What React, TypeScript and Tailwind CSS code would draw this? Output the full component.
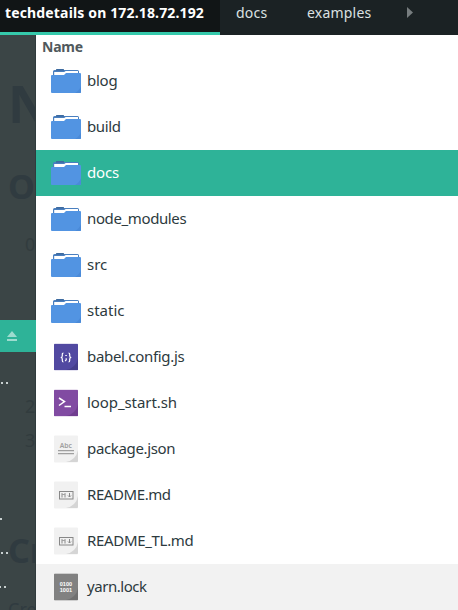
import React from "react";

type Kind = "folder" | "babel" | "shell" | "text" | "markdown" | "binary";
type Entry = { name: string; kind: Kind; tracking?: string };

const entries: Entry[] = [
  { name: "blog", kind: "folder", tracking: "tracking-[-0.25px]" },
  { name: "build", kind: "folder", tracking: "tracking-[-0.4px]" },
  { name: "docs", kind: "folder", tracking: "tracking-[-0.15px]" },
  { name: "node_modules", kind: "folder", tracking: "tracking-[-0.38px]" },
  { name: "src", kind: "folder" },
  { name: "static", kind: "folder" },
  { name: "babel.config.js", kind: "babel", tracking: "tracking-[-0.32px]" },
  { name: "loop_start.sh", kind: "shell", tracking: "tracking-[-0.08px]" },
  { name: "package.json", kind: "text", tracking: "tracking-[-0.35px]" },
  { name: "README.md", kind: "markdown", tracking: "tracking-[-0.42px]" },
  { name: "README_TL.md", kind: "markdown", tracking: "tracking-[-0.32px]" },
  { name: "yarn.lock", kind: "binary", tracking: "tracking-[-0.45px]" },
];

function FolderIcon() {
  return (
    <svg width="30" height="24" viewBox="0 0 30 24" className="block">
      <path d="M2 7V2.500Q2 1 3.500 1H5l1-1h6l1 1h13.500Q28 1 28 2.500V7Z" fill="#4a7fbf" />
      <path d="M3.200 3h10l1.500-1H27v5H3.200Z" fill="#fff" />
      <path d="M5 .3h8v1.200H5Z" fill="#386394" />
      <path d="M0 7Q0 6 1 6h12l2-2h14q1 0 1 1v18q0 1-1 1H1q-1 0-1-1Z" fill="#5294e2" />
      <path d="M30 17v6q0 1-1 1h-5q4.500-2.500 6-7Z" fill="#4a8ad8" />
    </svg>
  );
}

const sheet: Record<Exclude<Kind, "folder">, [string, string, string]> = {
  babel: ["#5149a1", "#453e8b", "#c9c6e4"],
  shell: ["#814ba2", "#703d8f", "#d7c5e1"],
  text: ["#f1f1f1", "#d5d5d5", "#f1f1f1"],
  markdown: ["#f1f1f1", "#d5d5d5", "#f1f1f1"],
  binary: ["#818181", "#707070", "#aaa"],
};

function FileIcon({ kind }: { kind: Exclude<Kind, "folder"> }) {
  const [body, fold, edge] = sheet[kind];
  return (
    <svg width="24" height="28" viewBox="0 0 24 28" className="block">
      <rect y=".5" width="24" height="27" rx="1" fill={edge} />
      <rect y="1" width="24" height="26" rx=".5" fill={body} />
      <path d="M24 15v11q0 1-1 1H12Q22 25 24 15Z" fill={fold} />
      {kind === "babel" && (
        <g fill="none" stroke="#fff" strokeWidth="1.200">
          <path d="M9.500 10Q8.300 10 8.300 11.300v1.400Q8.300 14.500 6.700 14.500 8.300 14.500 8.300 16v1.500q0 1.500 1.200 1.500M14.500 10Q15.700 10 15.700 11.300v1.400q0 1.800 1.600 1.800Q15.700 14.500 15.700 16v1.500q0 1.500-1.200 1.500" />
          <path d="M11.300 12.500h1.500M12.200 15.300v1.500l-1 1.200" />
        </g>
      )}
      {kind === "shell" && (
        <path d="m5 9 5.500 3.500L5 16.500M10.500 17.500H17" fill="none" stroke="#fff" strokeWidth="1.500" />
      )}
      {kind === "text" && (
        <g fill="#a0a0a0">
          <text x="5.700" y="12.500" fontSize="6.800" fontWeight="600" fontFamily="Noto Sans, sans-serif">Abc</text>
          <path d="M4 15h16v1.200H4zM4 18h16v1.200H4z" />
        </g>
      )}
      {kind === "markdown" && (
        <g fill="none" stroke="#888">
          <rect x="5.500" y="10.500" width="13.500" height="7.500" />
          <path d="M8 16.500v-4L9.500 14 11 12.500v4M15.500 12v4m-1.500-1.500 1.500 1.500 1.500-1.500" />
        </g>
      )}
      {kind === "binary" && (
        <g fill="#fff" fontSize="5.600" fontWeight="700" fontFamily="Liberation Sans, sans-serif">
          <text x="5.700" y="12.500">0100</text>
          <text x="5.700" y="19">1001</text>
        </g>
      )}
    </svg>
  );
}

function Row({ entry }: { entry: Entry }) {
  const tone =
    entry.name === "docs"
      ? "bg-[#2eb398] text-white"
      : entry.name === "yarn.lock"
        ? "bg-[#f2f2f2] text-[#2d3a3e]"
        : "text-[#2d3a3e]";
  return (
    <li className={`flex h-[46px] items-center pl-[15px] ${tone}`}>
      <span className="flex w-[30px] justify-center">
        {entry.kind === "folder" ? <FolderIcon /> : <FileIcon kind={entry.kind} />}
      </span>
      <span className={`ml-[6px] whitespace-nowrap pb-[2px] text-[15px] leading-[20px] ${entry.tracking ?? ""}`}>{entry.name}</span>
    </li>
  );
}

function Backdrop() {
  return (
    <aside className="relative w-9 shrink-0 overflow-hidden bg-[#3b4546] text-[#303b40]">
      <span className="absolute left-[8px] top-[34px] text-[52px] font-bold leading-[68px]">N</span>
      <span className="absolute left-[8px] top-[128px] text-[34px] font-bold leading-[46px]">O</span>
      <span className="absolute left-[25px] top-[198px] text-[18px] leading-[22px] text-[#323c3e]">0</span>
      <span className="absolute left-[25px] top-[360px] text-[18px] leading-[22px] text-[#323c3e]">2</span>
      <span className="absolute left-[25px] top-[394px] text-[18px] leading-[22px] text-[#323c3e]">3</span>
      <span className="absolute left-[8px] top-[492px] text-[34px] font-bold leading-[46px]">Cr</span>
      <span className="absolute left-[8px] top-[563px] text-[18px] leading-[22px]">Cre</span>
      <div className="absolute inset-y-0 right-0 w-px bg-[#303b3d]" />
      <div className="absolute left-0 top-[285px] flex h-8 w-9 items-center bg-[#2eb398] pl-[7px]">
        <svg width="10" height="10" viewBox="0 0 10 10" fill="#9ddccf">
          <path d="M5 0 10 6H0ZM0 8h10v2H0Z" />
        </svg>
      </div>
      <svg className="absolute left-0 top-0" width="12" height="575" fill="#c8d0d0">
        <path d="M1 347h2v2H1zM6 347h2v2H6zM0 483h2v2H0zM1 517h2v2H1zM6 517h2v2H6zM0 551h1v2H0zM4 551h2v2H4z" />
      </svg>
    </aside>
  );
}

export default function App() {
  return (
    <div className="flex h-[610px] w-[458px] flex-col overflow-hidden bg-white font-['Noto_Sans','Open_Sans',sans-serif]">
      <header className="flex h-[35px] shrink-0 bg-[#1b2224] text-[14px] leading-[20px] text-[#dce1e2]">
        <div className="w-[220px] shrink-0 whitespace-nowrap border-b-[3px] border-[#35c9ab] bg-[#111516] pl-[5px] pt-[3px] font-bold tracking-[0.15px] text-white">
          techdetails on 172.18.72.192
        </div>
        <div className="w-[71px] pl-4 pt-[3px] tracking-[0.2px]">docs</div>
        <div className="w-[116px] pl-4 pt-[3px] tracking-[0.2px]">examples</div>
        <svg className="mt-[7px]" width="6" height="11" viewBox="0 0 6 11" fill="#777d7f"><path d="m0 0 6 5.500L0 11Z" /></svg>
      </header>
      <div className="flex min-h-0 flex-1">
        <Backdrop />
        <main className="min-w-0 flex-1 bg-white">
          <h1 className="h-[23px] pl-[6px] pt-[2px] text-[14px] font-bold leading-[20px] tracking-[-0.2px] text-[#50595c]">Name</h1>
          <ul>
            {entries.map((entry) => (
              <Row key={entry.name} entry={entry} />
            ))}
          </ul>
        </main>
      </div>
    </div>
  );
}
